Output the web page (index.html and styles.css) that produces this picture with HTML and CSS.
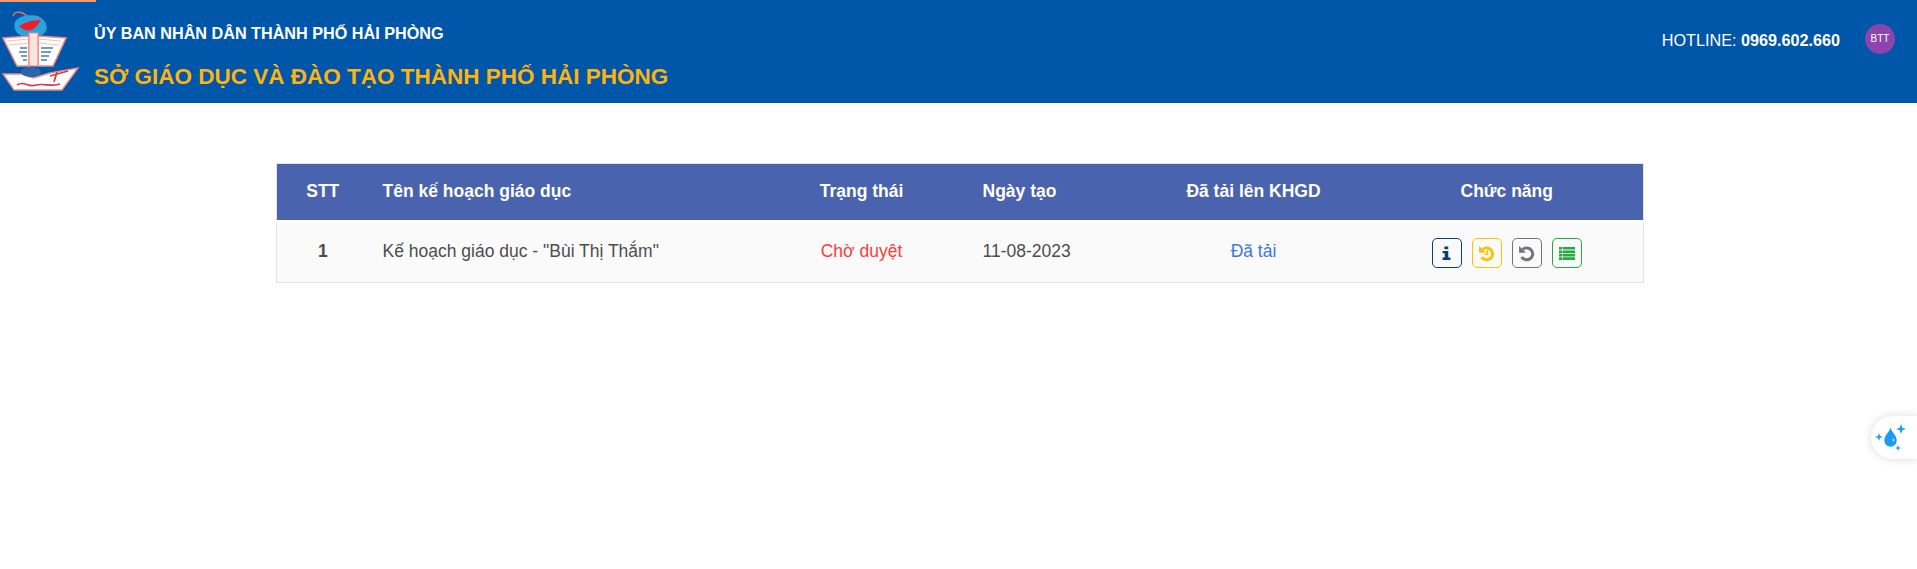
FILE: index.html

```html
<!DOCTYPE html>
<html lang="en">
<head>
  <meta charset="UTF-8" />
  <title>Kế hoạch giáo dục</title>
  <link rel="stylesheet" href="styles.css">
</head>
<body>
  <div class="progress"></div>
  <header class="topbar">
    <svg class="logo" viewBox="0 0 80 92" role="img" aria-label="Logo">
      <path d="M13 16 C15 10 24 11 29 19 M29 19 C36 12 46 20 46 30" fill="none" stroke="#e9785f" stroke-width="1.3"/>
      <path d="M15 22 C20 14 38 12 45 22 C49 30 44 37 37 35 L22 36 C16 34 13 28 15 22Z" fill="#27a4de"/>
      <path d="M19 26 C24 23 32 20 41 20 C38 24 37 27 33 29 C28 32 23 30 19 26Z" fill="#ee1c25"/>
      <path d="M3 38 L29 36 L29 66 L17 66Z" fill="#fff" stroke="#f08b83" stroke-width="1.6"/>
      <path d="M38 36 L66 38 L53 66 L38 66Z" fill="#fff" stroke="#f08b83" stroke-width="1.6"/>
      <path d="M7 41 L29 39 M9 45 L29 43 M61 41 L38 39 M59 45 L38 43" fill="none" stroke="#f8bdb7" stroke-width="1.2"/>
      <path d="M29 33 H38 V66 H29Z" fill="#fde4df" stroke="#f08b83" stroke-width="1.2"/>
      <path d="M20 48 H27 M19 52 H27 M21 56 H27 M23 60 H27 M41 48 H53 M41 52 H51 M41 56 H49 M41 60 H47" stroke="#6f9ccb" stroke-width="2"/>
      <path d="M3 74 L22 74 L33 78 L50 73 L78 68 L62 90 L14 90Z" fill="#fff" stroke="#f08b83" stroke-width="1.4"/>
      <ellipse cx="31" cy="72" rx="10" ry="5" fill="#2a67ac"/>
      <path d="M17 85 C24 80 28 88 36 85 C44 83 52 87 60 84 M50 76 L68 71 M57 72 L54 82" fill="none" stroke="#d8394a" stroke-width="1.7"/>
    </svg>
    <div class="titles">
      <div class="title-top">ỦY BAN NHÂN DÂN THÀNH PHỐ HẢI PHÒNG</div>
      <div class="title-main">SỞ GIÁO DỤC VÀ ĐÀO TẠO THÀNH PHỐ HẢI PHÒNG</div>
    </div>
    <div class="hotline">HOTLINE: <b>0969.602.660</b></div>
    <div class="avatar">BTT</div>
  </header>

  <main class="content">
    <table class="plans">
      <thead>
        <tr>
          <th class="col-stt">STT</th>
          <th class="col-name">Tên kế hoạch giáo dục</th>
          <th class="col-status">Trạng thái</th>
          <th class="col-date">Ngày tạo</th>
          <th class="col-upload">Đã tải lên KHGD</th>
          <th class="col-actions">Chức năng</th>
        </tr>
      </thead>
      <tbody>
        <tr>
          <td class="col-stt"><b>1</b></td>
          <td class="col-name">Kế hoạch giáo dục - "Bùi Thị Thắm"</td>
          <td class="col-status pending">Chờ duyệt</td>
          <td class="col-date">11-08-2023</td>
          <td class="col-upload"><a href="#">Đã tải</a></td>
          <td class="col-actions">
            <div class="actions">
              <button class="btn btn-info" title="Thông tin">
                <svg viewBox="0 0 12 16"><path d="M3.6 0.5h4.4v3.2H3.6z M1.5 5.6h6.5v7.6h2.5V16h-9v-2.8H4V8.4H1.5z"/></svg>
              </button>
              <button class="btn btn-warn" title="Lịch sử">
                <svg viewBox="0 0 16 16">
                  <path class="arc" d="M4.4 4.2 A5.6 5.6 0 1 1 3.4 11.2"/>
                  <path d="M1 1 L7.4 7.2 L1 7.2Z"/>
                  <path d="M8 5h1.5v4.4H6.4V8H8z"/>
                </svg>
              </button>
              <button class="btn btn-undo" title="Hoàn tác">
                <svg viewBox="0 0 16 16">
                  <path class="arc" d="M4.4 4.2 A5.6 5.6 0 1 1 3.4 11.2"/>
                  <path d="M1 1 L7.4 7.2 L1 7.2Z"/>
                </svg>
              </button>
              <button class="btn btn-list" title="Danh sách">
                <svg viewBox="0 0 16 13"><path d="M0 0h3v2.6H0zM3.6 0H16v2.6H3.6zM0 3.4h3v2.6H0zM3.6 3.4H16v2.6H3.6zM0 6.8h3v2.6H0zM3.6 6.8H16v2.6H3.6zM0 10.2h3V13H0zM3.6 10.2H16V13H3.6z"/></svg>
              </button>
            </div>
          </td>
        </tr>
      </tbody>
    </table>
  </main>

  <div class="float-tab">
    <svg viewBox="0 0 30 28">
      <path d="M15.5 3.5 C16.5 8 21.7 11 21.7 16.5 A6.2 6.2 0 0 1 9.3 16.5 C9.3 11 14.5 8 15.5 3.5Z"/>
      <path d="M26 0 L27.3 3.7 L31 5 L27.3 6.3 L26 10 L24.7 6.3 L21 5 L24.7 3.7Z"/>
      <path d="M4 9 L5 12 L8 13 L5 14 L4 17 L3 14 L0 13 L3 12Z"/>
      <path d="M23 21 L23.8 23.2 L26 24 L23.8 24.8 L23 27 L22.2 24.8 L20 24 L22.2 23.2Z"/>
      <ellipse class="shine" cx="18.4" cy="16" rx="0.9" ry="1.6"/>
    </svg>
  </div>
</body>
</html>
```

FILE: styles.css

```css
html, body {
  height: 100%;
}
body {
  margin: 0;
  font-family: 'Liberation Sans', Arial, sans-serif;
  font-size: 17.5px;
  color: #4d4d4d;
  background: #fff;
  overflow: hidden;
}
.progress {
  position: absolute;
  top: 0;
  left: 0;
  width: 96px;
  height: 2px;
  background: #f6986c;
}
.topbar {
  display: flex;
  align-items: flex-start;
  height: 103px;
  background: #0056a8;
  color: #fff;
}
.logo {
  width: 80px;
  height: 92px;
  flex: none;
}
.titles {
  margin-left: 14px;
  flex: 1;
}
.title-top {
  margin-top: 24px;
  font-size: 16.2px;
  line-height: 18px;
  font-weight: 700;
}
.title-main {
  margin-top: 22px;
  font-size: 22.5px;
  line-height: 26px;
  font-weight: 700;
  color: #ffb30f;
}
.hotline {
  margin-top: 31px;
  font-size: 16.2px;
  line-height: 18px;
}
.avatar {
  width: 30px;
  height: 30px;
  margin: 24px 22px 0 25px;
  border-radius: 50%;
  background: #8e44ad;
  font-size: 10px;
  line-height: 30px;
  text-align: center;
}
.content {
  padding: 60px 273px 0 276px;
}
.plans {
  width: 100%;
  table-layout: fixed;
  border-collapse: collapse;
  border: 1px solid #e3e3e3;
}
.plans th,
.plans td {
  box-sizing: border-box;
}
.plans th {
  height: 58px;
  padding: 0 0 1px;
  background: #4a63ae;
  color: #fff;
  font-size: 17.5px;
  font-weight: 700;
  border-bottom: 3px solid #fff;
}
.plans td {
  height: 61px;
  padding: 0 0 3px;
  background: #fafafa;
  text-align: center;
}
.col-stt { width: 92px; }
.col-name { width: 387px; }
.col-status { width: 212px; }
.col-date { width: 169px; }
.col-upload { width: 234px; }
.plans .col-name { text-align: left; padding-left: 14px; }
.plans .col-date { text-align: left; padding-left: 15px; }
.pending { color: #ff3b3b; }
.plans a {
  color: #3b78e7;
  text-decoration: none;
}
.actions {
  display: flex;
  justify-content: center;
  gap: 10px;
  padding-top: 4px;
}
.btn {
  display: flex;
  align-items: center;
  justify-content: center;
  width: 30px;
  height: 30px;
  padding: 0;
  background: transparent;
  border: 1px solid;
  border-radius: 5px;
}
.btn svg {
  width: 17px;
  height: 17px;
  fill: currentColor;
}
.btn svg .arc {
  fill: none;
  stroke: currentColor;
  stroke-width: 2.8;
}
.btn-info { color: #0a3d7c; border-color: #0a3d7c; }
.btn-info svg { width: 11px; height: 14px; }
.btn-warn { color: #ffc107; border-color: #ffc107; }
.btn-undo { color: #6c757d; border-color: #6c757d; }
.btn-list { color: #28a745; border-color: #28a745; }
.btn-list svg { width: 16px; height: 13px; }
.float-tab {
  position: absolute;
  top: 416px;
  right: 0;
  display: flex;
  align-items: center;
  width: 46px;
  height: 43px;
  padding-left: 4px;
  box-sizing: border-box;
  background: #fff;
  border-radius: 22px 0 0 22px;
  box-shadow: 0 0 10px rgba(0, 0, 0, 0.15);
}
.float-tab svg {
  width: 30px;
  height: 28px;
  fill: #1e9bf0;
  overflow: visible;
}
.float-tab .shine {
  fill: #bfe3fb;
}
```
